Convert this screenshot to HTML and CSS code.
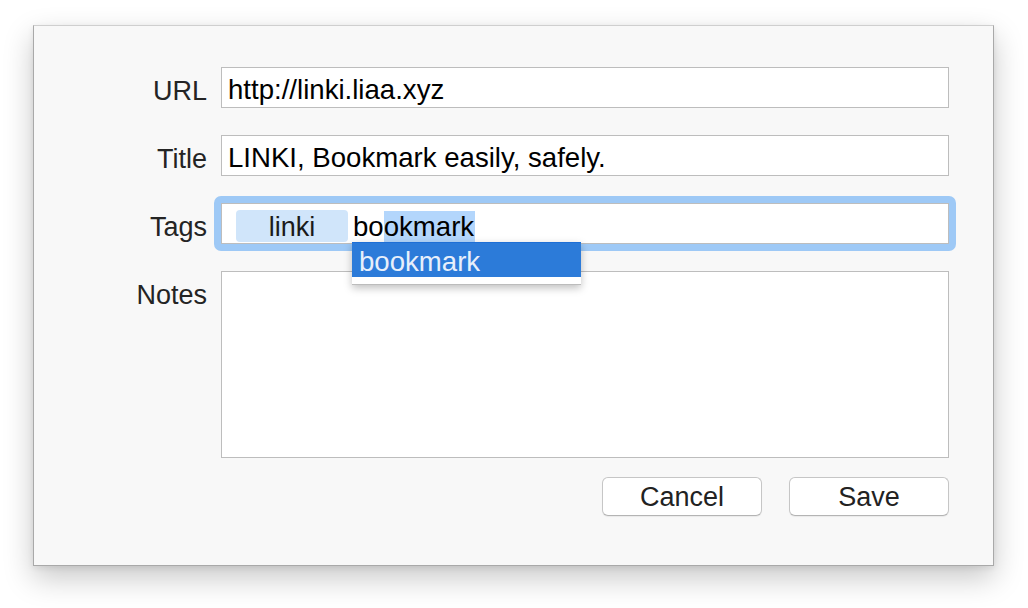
FILE: index.html
```html
<!DOCTYPE html>
<html>
<head>
<meta charset="utf-8">
<link rel="stylesheet" href="styles.css">
</head>
<body>
<div class="dialog">
  <form class="form">
    <label class="label">URL</label>
    <div class="field">http://linki.liaa.xyz</div>
    <label class="label">Title</label>
    <div class="field">LINKI, Bookmark easily, safely.</div>
    <label class="label">Tags</label>
    <div class="field field-tags">
      <span class="chip">linki</span><span class="typed">bo<span class="sel">okmark</span></span>
      <div class="suggest">
        <div class="suggest-item">bookmark</div>
      </div>
    </div>
    <label class="label">Notes</label>
    <div class="field field-notes"></div>
    <div class="actions">
      <button type="button" class="btn">Cancel</button>
      <button type="button" class="btn">Save</button>
    </div>
  </form>
</div>
</body>
</html>
```
FILE: styles.css
```css
html, body {
  margin: 0;
  padding: 0;
  background: #ffffff;
}
body {
  box-sizing: border-box;
  min-height: 608px;
  font-family: "Liberation Sans", Arial, sans-serif;
  font-size: 27px;
  padding: 25px 0 0 33px;
}
.dialog {
  box-sizing: border-box;
  width: 961px;
  height: 541px;
  background: #f8f8f8;
  border: 1px solid #a9a9a9;
  border-top-color: #cfcfcf;
  box-shadow: 0 12px 28px rgba(0, 0, 0, 0.22), 0 2px 6px rgba(0, 0, 0, 0.08);
}
.form {
  display: grid;
  grid-template-columns: 173px 728px;
  grid-template-rows: 41px 41px 41px 187px 39px;
  column-gap: 14px;
  row-gap: 27px;
  padding-top: 41px;
}
.form .actions {
  grid-column: 2;
  margin-top: -8px;
}
.label {
  text-align: right;
  color: #242424;
  line-height: 41px;
  padding-top: 4px;
  align-self: start;
}
.field {
  position: relative;
  box-sizing: border-box;
  background: #ffffff;
  border: 1px solid #bdbdbd;
  color: #000;
  font-size: 27.6px;
  line-height: 35px;
  padding: 4px 6px 0 6px;
  white-space: nowrap;
}
.field-tags {
  display: flex;
  align-items: flex-start;
  padding: 0;
  line-height: 31px;
}
.field-tags::before {
  content: "";
  position: absolute;
  inset: -8px;
  border-radius: 7px;
  border: 7px solid #9ec9f6;
  pointer-events: none;
}
.chip {
  margin: 6px 0 0 14px;
  width: 112px;
  height: 32px;
  line-height: 34px;
  text-align: center;
  background: #d0e5fa;
  border-radius: 4px;
  color: #1a1a1a;
  font-size: 27px;
}
.typed {
  margin: 5px 0 0 5px;
  line-height: 35px;
}
.sel {
  background: #b3d6fc;
  padding-right: 1px;
}
.suggest {
  position: absolute;
  left: 130px;
  top: 38px;
  width: 229px;
  background: #ffffff;
  padding-bottom: 7px;
  border-bottom: 1px solid #bcbcbc;
  box-shadow: 0 3px 8px rgba(0, 0, 0, 0.25);
  z-index: 2;
}
.suggest-item {
  background: #2c7bd9;
  border-top: 1px solid #1e6fd6;
  color: #e7effb;
  height: 34px;
  line-height: 38px;
  padding-left: 7px;
}
.actions {
  display: flex;
  justify-content: flex-end;
  gap: 27px;
}
.btn {
  box-sizing: border-box;
  width: 160px;
  height: 39px;
  background: #ffffff;
  border: 1px solid #c6c6c6;
  border-bottom-color: #b4b4b4;
  border-radius: 6px;
  box-shadow: 0 1px 1px rgba(0, 0, 0, 0.06);
  font-family: "Liberation Sans", Arial, sans-serif;
  font-size: 27px;
  color: #222;
  line-height: 38px;
  padding: 0;
}
```
